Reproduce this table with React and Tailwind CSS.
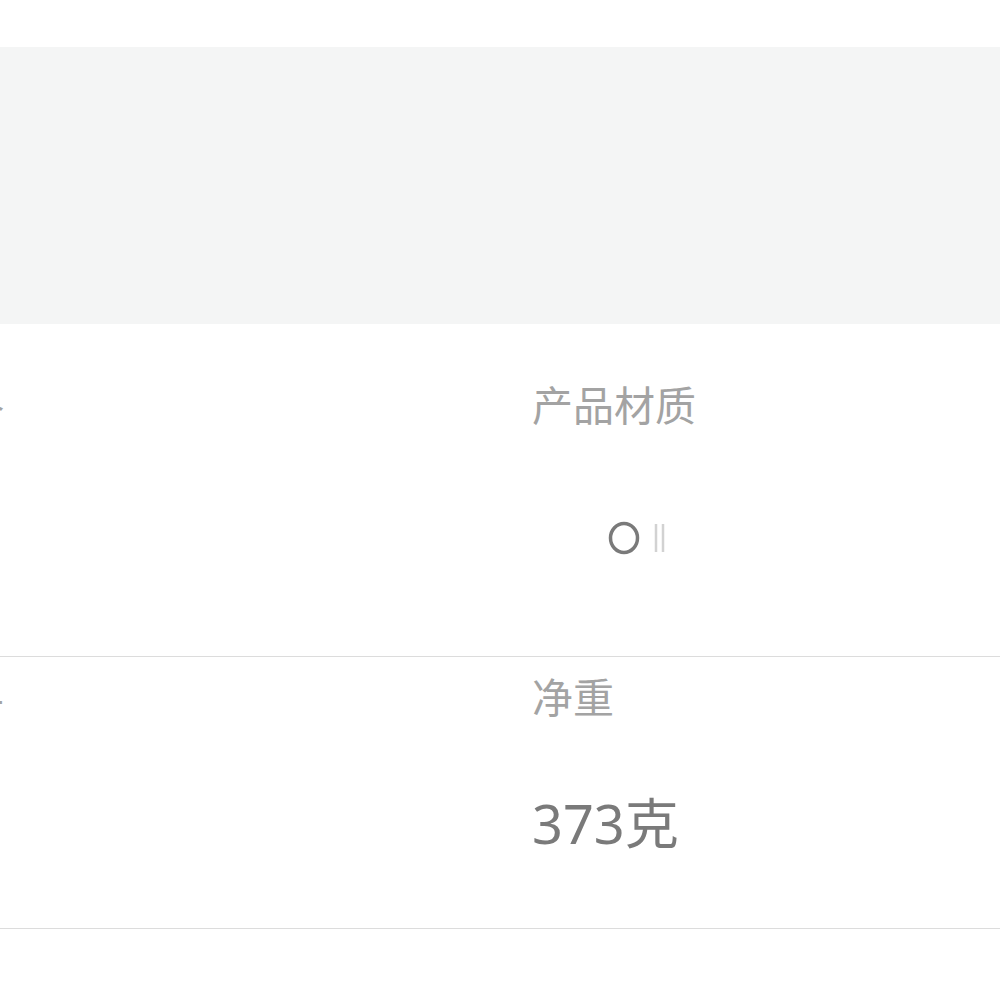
const font = { fontFamily: '"Noto Sans", "Noto Sans CJK SC", sans-serif' };

const SpecCell = ({ label, children, labelTop, gap }) => (
  <div className={`flex flex-col items-start ${labelTop}`}>
    <div className="text-[41px] leading-[48px] text-[#a3a3a3]">{label}</div>
    <div className={gap}>{children}</div>
  </div>
);

const MaterialIcon = () => (
  <svg width="64" height="40" viewBox="0 0 64 40" className="ml-[76px]">
    <ellipse cx="16" cy="20" rx="13.5" ry="14.5" fill="none" stroke="#7a7a7a" strokeWidth="3.5" />
    <line x1="48" y1="6" x2="48" y2="34" stroke="#d2d2d2" strokeWidth="2.5" />
    <line x1="55" y1="6" x2="55" y2="34" stroke="#d2d2d2" strokeWidth="2.5" />
  </svg>
);

export default function App() {
  return (
    <div className="w-[1000px] h-[1000px] bg-white overflow-hidden" style={font}>
      <div className="h-[47px]" />
      <div className="h-[277px] bg-[#f4f5f5]" />

      <div className="-ml-[160px] w-[1384px]">
        <div className="grid grid-cols-[692px_692px] h-[333px] border-b border-[#dcdcdc]">
          <SpecCell label="产品规格" labelTop="pt-[57px]" gap="mt-[89px]" />
          <SpecCell label="产品材质" labelTop="pt-[57px]" gap="mt-[89px]">
            <MaterialIcon />
          </SpecCell>
        </div>

        <div className="grid grid-cols-[692px_692px] h-[272px] border-b border-[#dcdcdc]">
          <SpecCell label="产品尺寸" labelTop="pt-[30px]" gap="mt-[73px]" />
          <SpecCell label="净重" labelTop="pt-[16px]" gap="mt-[71px]">
            <div className="text-[54px] leading-[62px] text-[#7a7a7a]">373克</div>
          </SpecCell>
        </div>
      </div>
    </div>
  );
}
